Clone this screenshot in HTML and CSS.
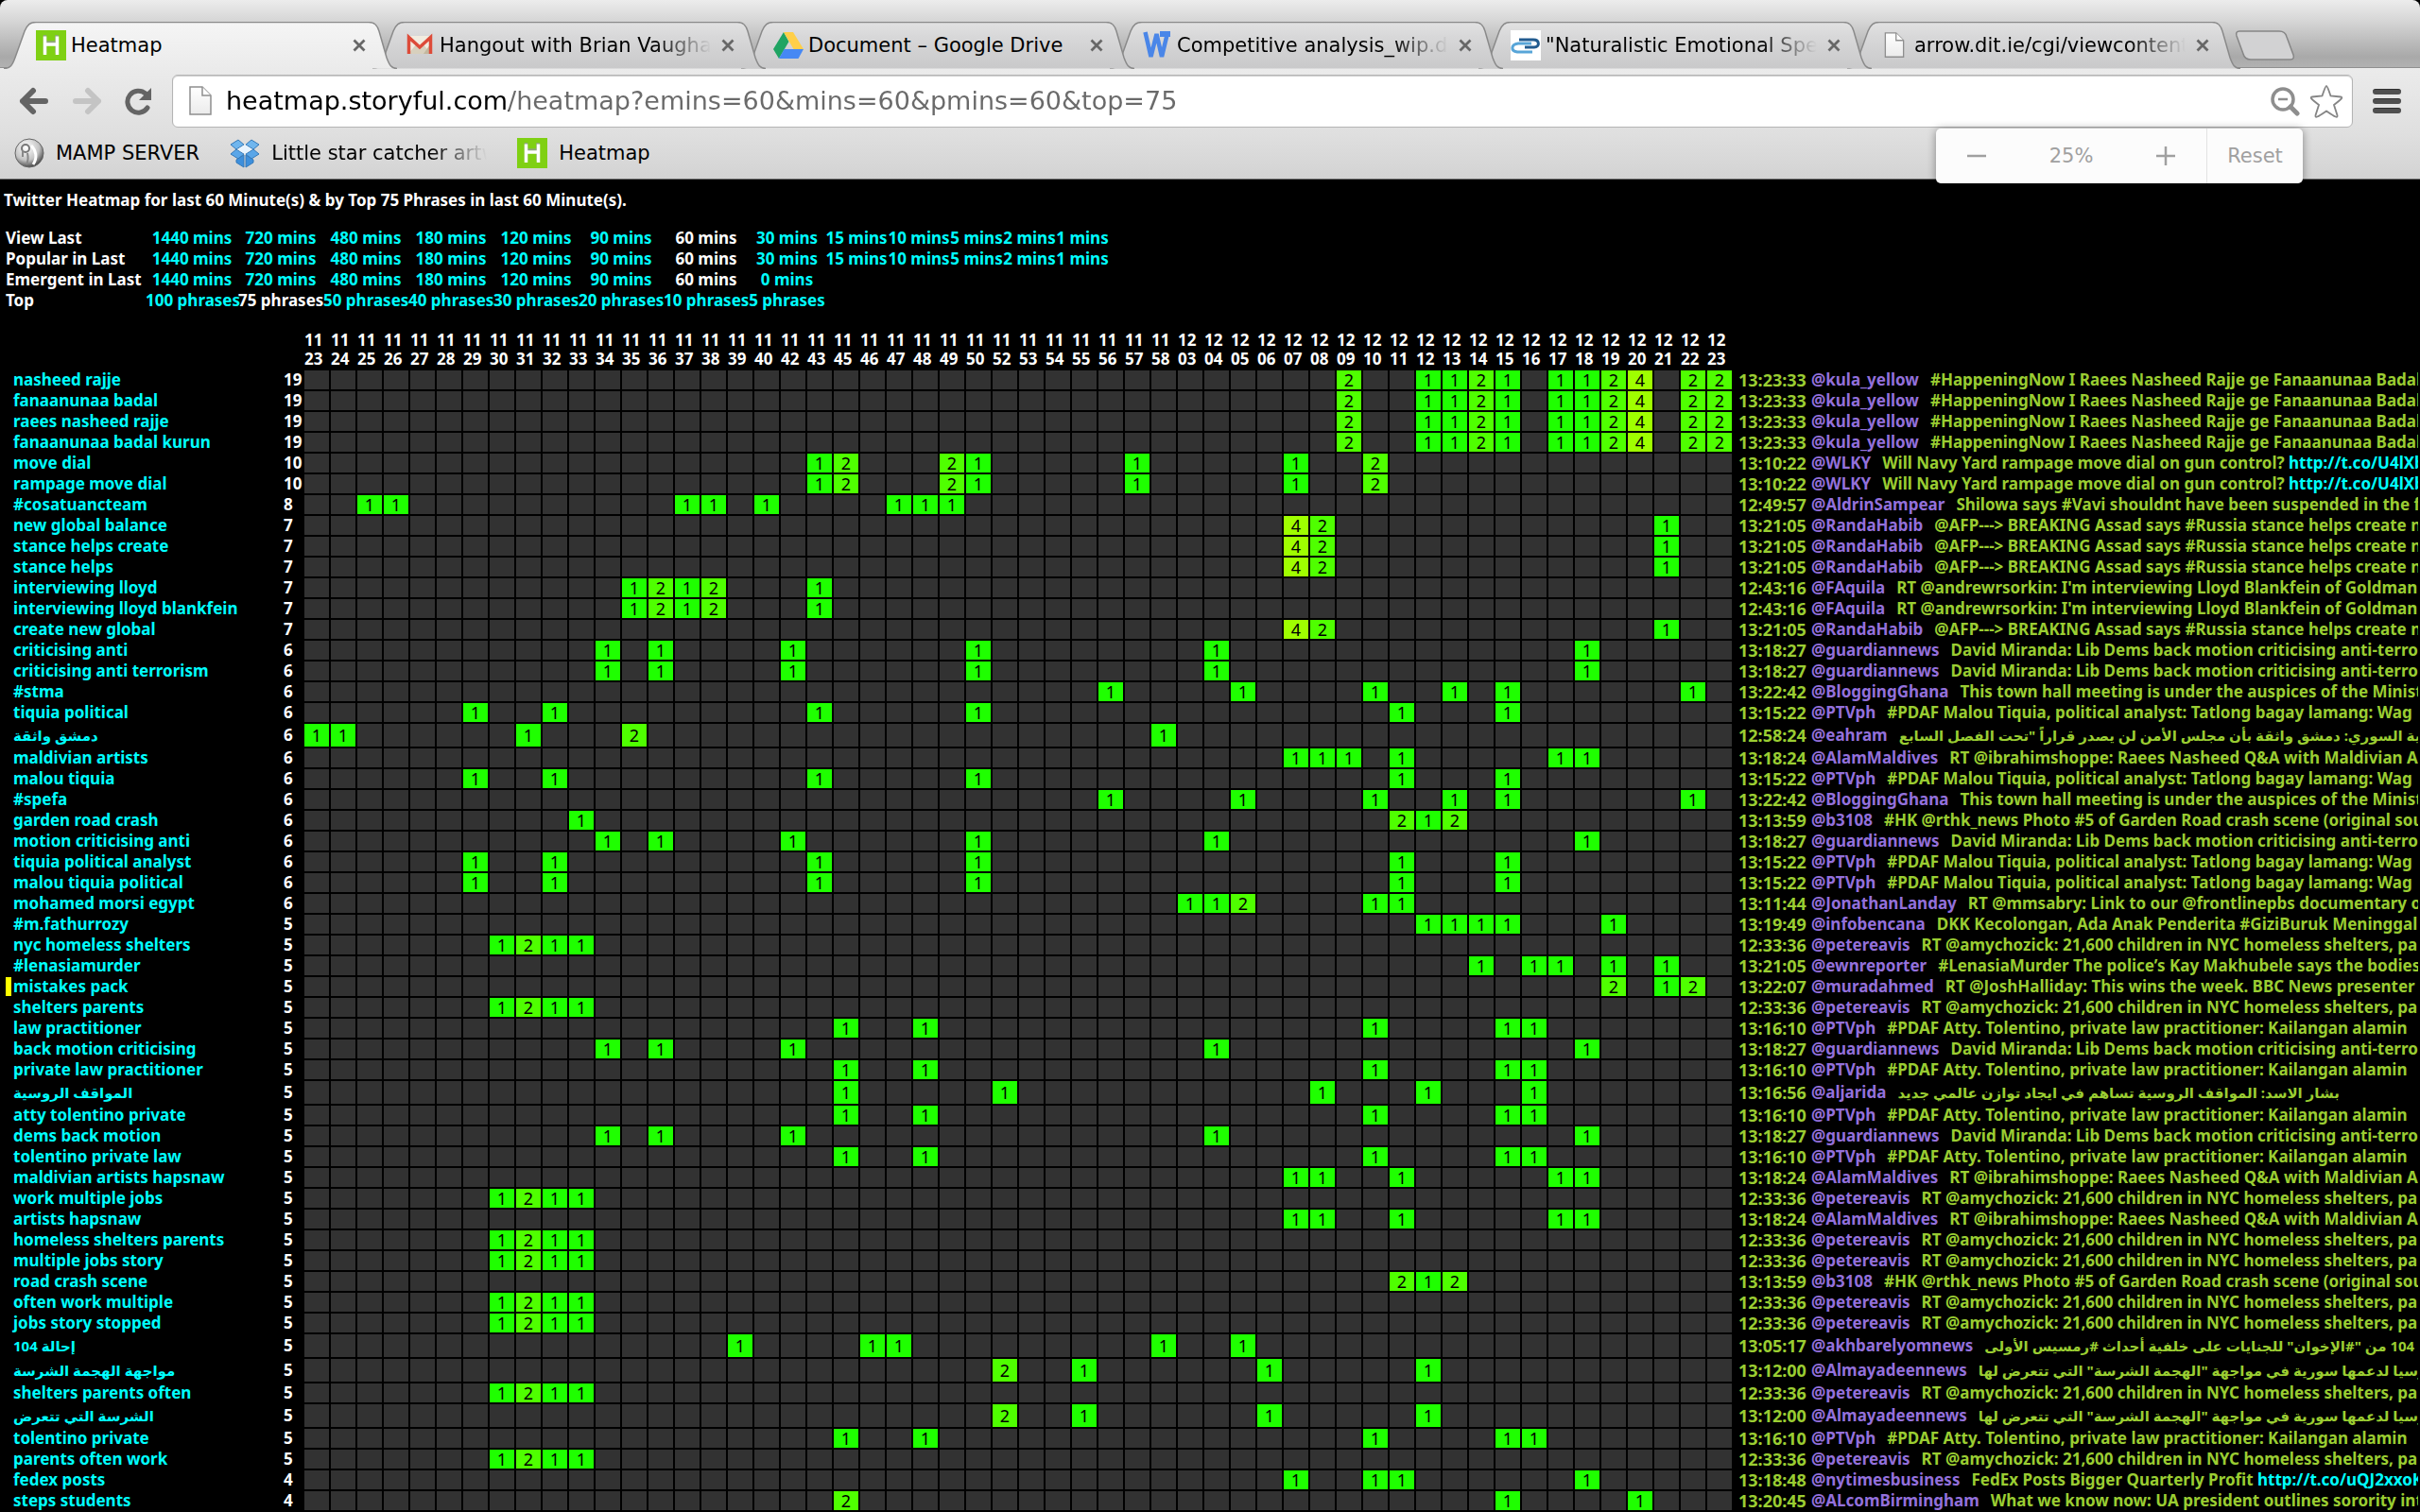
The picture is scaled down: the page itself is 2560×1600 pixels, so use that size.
FILE: index.html
```html
<!DOCTYPE html>
<html lang="en">
<head>
<meta charset="utf-8">
<title>Heatmap</title>
<link rel="stylesheet" href="styles.css">
</head>
<body>
<svg class="defs" aria-hidden="true">
  <defs>
    <linearGradient id="tab-on" x1="0" y1="0" x2="0" y2="1"><stop offset="0" stop-color="#f5f5f5"/><stop offset="1" stop-color="#ebebeb"/></linearGradient>
    <linearGradient id="tab-off" x1="0" y1="0" x2="0" y2="1"><stop offset="0" stop-color="#e2e2e2"/><stop offset="0.3" stop-color="#d8d8d9"/><stop offset="1" stop-color="#c9c9ca"/></linearGradient>
    <linearGradient id="paper" x1="0" y1="0" x2="0" y2="1"><stop offset="0" stop-color="#ffffff"/><stop offset="1" stop-color="#ebebeb"/></linearGradient>
    <radialGradient id="ball" cx="0.4" cy="0.3" r="0.75"><stop offset="0" stop-color="#ffffff"/><stop offset="0.6" stop-color="#c4c4c4"/><stop offset="1" stop-color="#333333"/></radialGradient>
    <symbol id="shape" viewBox="0 0 416 50" preserveAspectRatio="none">
      <path d="M0 49.500C7 49.500 9 46 12 38L22 10C25 3 28 0.500 34 0.500H386C392 0.500 395 3 397 10L405 38C408 46 410 49.500 416 49.500" stroke="#8a8a8a" stroke-width="1.500"/>
    </symbol>
    <symbol id="page" viewBox="0 0 24 32"><path d="M1 1H14L23 10V30H1Z" fill="url(#paper)" stroke="#8f8f8f" stroke-width="1.500"/><path d="M14 1V10H23" fill="#fff" stroke="#8f8f8f" stroke-width="1.500"/></symbol>
    <symbol id="h-logo" viewBox="0 0 32 32"><path fill="#7fd013" d="M0 0H32V32H0Z"/><path fill="none" stroke="#8fa878" stroke-width="3.500" d="M9.500 5V24M22 5V24M9.500 13H22"/><path fill="none" stroke="#fff" stroke-width="3.500" d="M9.500 6.500V26M22.500 6.500V26M9.500 15H22.500"/></symbol>
    <symbol id="close" viewBox="0 0 16 16"><path d="M2.500 2.500L13.500 13.500M13.500 2.500L2.500 13.500" stroke="#676767" stroke-width="2.800" fill="none"/></symbol>
  </defs>
</svg>

<header class="browser">
  <nav class="tabs" aria-label="Open tabs">
    <div class="tab on"><svg class="shape"><use href="#shape" fill="url(#tab-on)"/></svg>
      <div class="tab-body"><svg class="fav"><use href="#h-logo"/></svg><span class="tab-title">Heatmap</span><button class="x" aria-label="Close tab"><svg><use href="#close"/></svg></button></div></div>
    <div class="tab"><svg class="shape"><use href="#shape" fill="url(#tab-off)"/></svg>
      <div class="tab-body"><svg class="fav" viewBox="0 0 32 32"><path fill="#f1ece0" d="M3 6H29V25H3Z"/><path fill="#d8d0bd" d="M4 25L13 14L16 17L19 14L28 25Z"/><path fill="#c3b79e" d="M29 12V25H20Z"/><path fill="none" stroke="#dd4b39" stroke-width="3.500" d="M4.500 25V7.500L16 18L27.500 7.500V25"/></svg><span class="tab-title fade">Hangout with Brian Vaughan</span><button class="x" aria-label="Close tab"><svg><use href="#close"/></svg></button></div></div>
    <div class="tab"><svg class="shape"><use href="#shape" fill="url(#tab-off)"/></svg>
      <div class="tab-body"><svg class="fav" viewBox="0 0 32 32"><path fill="#1fa463" d="M11 2L0 20L6 30L16.500 12Z"/><path fill="#ffcf48" d="M11 2H21L32 20H21.500Z"/><path fill="#4688f4" d="M11.500 20H32L26.500 30H6Z"/></svg><span class="tab-title">Document – Google Drive</span><button class="x" aria-label="Close tab"><svg><use href="#close"/></svg></button></div></div>
    <div class="tab"><svg class="shape"><use href="#shape" fill="url(#tab-off)"/></svg>
      <div class="tab-body"><svg class="fav" viewBox="0 0 32 32"><path fill="none" stroke="#4a86e8" stroke-width="4.500" d="M3.500 2L9.500 28L15.500 4L21 28L27 3"/><path fill="#4a86e8" d="M19 1H30V7H19Z"/></svg><span class="tab-title fade">Competitive analysis_wip.docx</span><button class="x" aria-label="Close tab"><svg><use href="#close"/></svg></button></div></div>
    <div class="tab"><svg class="shape"><use href="#shape" fill="url(#tab-off)"/></svg>
      <div class="tab-body"><svg class="fav" viewBox="0 0 32 32"><path fill="#fff" d="M0 0H32V32H0Z"/><path fill="none" stroke="#225b8f" stroke-width="3" d="M9 10H24C31 10 31 18 25 18H15"/><path fill="none" stroke="#58a5d8" stroke-width="3" d="M22 14H8C0 15 0 22 7 23H23"/></svg><span class="tab-title fade">"Naturalistic Emotional Speech</span><button class="x" aria-label="Close tab"><svg><use href="#close"/></svg></button></div></div>
    <div class="tab"><svg class="shape"><use href="#shape" fill="url(#tab-off)"/></svg>
      <div class="tab-body"><svg class="fav"><use href="#page" x="4" y="2" width="24" height="28"/></svg><span class="tab-title fade">arrow.dit.ie/cgi/viewcontent</span><button class="x" aria-label="Close tab"><svg><use href="#close"/></svg></button></div></div>
    <button class="new-tab" aria-label="New tab"><svg viewBox="0 0 64 32"><path d="M5 1H47C51 1 54 3 55 7L62 26C63 29 62 31 59 31H17C13 31 10 29 9 25L2 6C1 3 2 1 5 1Z" fill="#d2d2d3" stroke="#868686" stroke-width="1.500"/></svg></button>
  </nav>

  <div class="toolbar">
    <button class="tool" aria-label="Back"><svg viewBox="0 0 32 30"><path d="M15 4L4 15L15 26M4 15H28" fill="none" stroke="#646464" stroke-width="6" stroke-linecap="round" stroke-linejoin="round"/></svg></button>
    <button class="tool" aria-label="Forward"><svg viewBox="0 0 32 30"><path d="M17 4L28 15L17 26M28 15H4" fill="none" stroke="#c4c4c4" stroke-width="6" stroke-linecap="round" stroke-linejoin="round"/></svg></button>
    <button class="tool" aria-label="Reload"><svg viewBox="0 0 32 30"><path d="M24 22A11.500 11.500 0 1 1 22 7" fill="none" stroke="#646464" stroke-width="5" stroke-linecap="round"/><path d="M28 1V14H15Z" fill="#646464"/></svg></button>
    <form class="omnibox">
      <svg class="doc"><use href="#page"/></svg>
      <input class="url" type="text" aria-label="Address" value="heatmap.storyful.com/heatmap?emins=60&amp;mins=60&amp;pmins=60&amp;top=75">
      <button class="in-box" type="button" aria-label="Zoom"><svg viewBox="0 0 32 32"><circle cx="14" cy="14" r="11" fill="none" stroke="#8e8e8e" stroke-width="3.500"/><path d="M9 14H19" stroke="#8e8e8e" stroke-width="2.500"/><path d="M22 22L29 29" stroke="#8e8e8e" stroke-width="5" stroke-linecap="round"/></svg></button>
      <button class="in-box star" type="button" aria-label="Bookmark"><svg viewBox="0 0 36 36"><path d="M18 2C19 2 20 5 22.500 12.500L33 13.500C36 14 34 16 26 22L29.500 33C30 36 28 35.500 18 28.500C8 35.500 6 36 6.500 33L10 22C2 16 0 14 3 13.500L13.500 12.500C16 5 17 2 18 2Z" fill="#fff" stroke="#858585" stroke-width="1.800"/></svg></button>
    </form>
    <button class="menu" aria-label="Menu"><i></i><i></i><i></i></button>
  </div>

  <div class="bookmarks">
    <a href="#" class="mark"><svg class="fav" viewBox="0 0 32 32"><circle cx="16" cy="16" r="15" fill="url(#ball)" stroke="#666" stroke-width="1"/><circle cx="12" cy="11" r="4" fill="none" stroke="#777" stroke-width="2"/><path d="M9 13V20M14 16C15 20 15 24 13 28" stroke="#888" stroke-width="2" fill="none"/><path d="M18 8C23 13 25 21 20 28" stroke="#fff" stroke-width="3" fill="none"/></svg><span>MAMP SERVER</span></a>
    <a href="#" class="mark"><svg class="fav" viewBox="0 0 32 32"><g stroke="#3579b8" stroke-width="1"><path fill="#70b6ee" d="M9 2L1 7L7 12L15 7ZM23 2L31 7L25 12L17 7Z"/><path fill="#5aa6e8" d="M1 17L7 12L15 17L9 22ZM31 17L25 12L17 17L23 22Z"/><path fill="#3d8fdc" d="M7 23L15 18V31L7 26ZM25 23L17 18V31L25 26Z"/></g><path fill="#e8f4ff" d="M16 7L24 12L16 17L8 12Z"/></svg><span class="mark-title fade">Little star catcher artwork</span></a>
    <a href="#" class="mark"><svg class="fav"><use href="#h-logo"/></svg><span>Heatmap</span></a>
  </div>

  <div class="zoom" role="dialog" aria-label="Page zoom">
    <button aria-label="Zoom out"><svg viewBox="0 0 20 20"><path d="M0 10H20" stroke="#a0a0a0" stroke-width="2.500"/></svg></button>
    <span>25%</span>
    <button aria-label="Zoom in"><svg viewBox="0 0 20 20"><path d="M0 10H20M10 0V20" stroke="#a0a0a0" stroke-width="2.500"/></svg></button>
    <button class="reset">Reset</button>
  </div>
</header>

<main>
  <h1>Twitter Heatmap for last 60 Minute(s) &amp; by Top 75 Phrases in last 60 Minute(s).</h1>
  <table class="filters">
    <colgroup><col class="f-name"><col class="f-first"><col class="f-wide" span="6"><col class="f-mid"><col class="f-slim" span="2"><col class="f-tiny" span="3"></colgroup>
    <tbody id="filters"></tbody>
  </table>
  <table class="heat">
    <colgroup><col class="c-flag"><col class="c-phrase"><col class="c-total"><col class="c-minute" span="54"><col></colgroup>
    <thead><tr id="minutes"></tr></thead>
    <tbody id="rows"></tbody>
  </table>
</main>
<script src="heatmap.js"></script>
</body>
</html>
```
FILE: styles.css
```css
* { box-sizing: border-box; }

body {
  margin: 0;
  background: #000;
  color: #fff;
  font: bold 17px/20px "Noto Sans", "DejaVu Sans", sans-serif;
  overflow-x: hidden;
}

button {
  border: 0;
  padding: 0;
  background: none;
  font: inherit;
  color: inherit;
}

a { color: #0ff; text-decoration: none; }
svg { display: block; }
.defs { position: absolute; width: 0; height: 0; }

/* Browser frame */
.browser {
  position: relative;
  height: 190px;
  border-bottom: 1px solid #6e6e6e;
  border-radius: 8px 8px 0 0;
  background: linear-gradient(#ececec, #d6d6d6 22px, #a9a9a9 60px, #b2b2b2 72px);
  color: #000;
  font: 21px/28px "DejaVu Sans", sans-serif;
}

.tabs {
  display: flex;
  height: 72px;
  padding: 23px 0 0 4px;
  border-bottom: 1px solid #8f8f8f;
}

.tab {
  display: grid;
  flex: 0 1 416px;
  height: 49px;
  min-width: 0;
  margin-right: -26px;
  z-index: 1;
}
.tab.on { z-index: 9; height: 50px; }
.tab:nth-child(2) { z-index: 6; }
.tab:nth-child(3) { z-index: 5; }
.tab:nth-child(4) { z-index: 4; }
.tab:nth-child(5) { z-index: 3; }
.tab:nth-child(6) { z-index: 2; }

.shape, .tab-body { grid-area: 1 / 1; }
.shape { width: 100%; height: 50px; }

.tab-body {
  display: flex;
  align-items: center;
  min-width: 0;
  padding: 0 32px 0 34px;
}

.fav { flex: none; width: 32px; height: 32px; }

.tab-title {
  flex: 1;
  min-width: 0;
  margin: 0 10px 0 5px;
  overflow: hidden;
  white-space: nowrap;
}

.fade {
  -webkit-mask-image: linear-gradient(to left, transparent, #000 60px);
  mask-image: linear-gradient(to left, transparent, #000 60px);
}

.x svg { width: 16px; height: 16px; }

.new-tab { width: 64px; height: 32px; margin: 9px 0 0 20px; }
.new-tab svg { width: 64px; height: 32px; }

.toolbar {
  display: flex;
  align-items: center;
  height: 70px;
  padding: 0 20px;
  background: linear-gradient(#ebebeb, #dfdfdf);
}

.tool { width: 32px; height: 30px; margin-right: 24px; }
.tool svg { width: 32px; height: 30px; }

.omnibox {
  display: flex;
  flex: 1;
  align-items: center;
  height: 56px;
  margin: 0 21px 0 -6px;
  padding: 0 9px 0 17px;
  border: 1px solid #b4b4b4;
  border-radius: 6px;
  background: #fff;
  box-shadow: inset 0 1px 1px #ccc;
}

.doc { flex: none; width: 24px; height: 32px; }

.url {
  flex: 1;
  min-width: 0;
  height: 40px;
  margin-left: 15px;
  padding: 0;
  border: 0;
  outline: 0;
  font: 27px/40px "DejaVu Sans", sans-serif;
  color: transparent;
  background: linear-gradient(to right, #000 299px, #6a6a6a 299px);
  -webkit-background-clip: text;
  background-clip: text;
}

.in-box svg { width: 32px; height: 32px; }
.star { margin-left: 10px; }
.star svg { width: 36px; height: 36px; }

.menu { display: grid; gap: 4px; width: 30px; }
.menu i { height: 6px; border-radius: 3px; background: #505050; border-top: 1px solid #303030; }

.bookmarks {
  display: flex;
  align-items: center;
  gap: 32px;
  height: 47px;
  padding: 0 15px 8px;
  background: linear-gradient(#dfdfdf, #d3d3d3);
}

.mark { display: flex; align-items: center; gap: 12px; color: #000; }
.mark-title { width: 228px; overflow: hidden; white-space: nowrap; }

.zoom {
  position: absolute;
  z-index: 10;
  top: 136px;
  right: 124px;
  display: grid;
  grid-template-columns: 86px 114px 86px 102px;
  width: 388px;
  height: 58px;
  border-radius: 5px;
  background: #fcfcfc;
  box-shadow: 0 1px 10px rgba(0, 0, 0, 0.4);
  color: #a0a0a0;
  align-items: center;
  text-align: center;
}
.zoom svg { width: 20px; height: 20px; margin: 0 auto; }
.zoom .reset { height: 58px; border-left: 1px solid #e2e2e2; }

/* Heatmap page */
main { padding: 11px 0 0 4px; }

h1 { margin: 0 0 18px; font-size: 17px; line-height: 22px; }

table { table-layout: fixed; border-collapse: separate; border-spacing: 0; }
th, td { padding: 0; text-align: left; font-weight: bold; white-space: nowrap; }

.filters { width: 1114px; margin: 0 0 19px 2px; }
.filters tr { height: 22px; }
.filters td { text-align: center; }
.filters .current { color: #fff; }
.f-name { width: 148px; }
.f-first { width: 98px; }
.f-wide { width: 90px; }
.f-mid { width: 81px; }
.f-slim { width: 66px; }
.f-tiny { width: 56px; }

.heat { width: 100%; border-spacing: 2px; }
.c-flag { width: 6px; }
.c-phrase { width: 284px; }
.c-total { width: 20px; }
.c-minute { width: 26px; }

.heat th { height: 40px; }
.heat tbody tr { height: 20px; }
.heat tbody tr.tall { height: 24px; }
.heat .flag { background: #ff0; }

.heat .cell { background: #323232; color: #000; font-size: 18px; font-weight: 400; text-align: center; }
.heat .n1 { background: #1fff00; }
.heat .n2 { background: #4fff00; }
.heat .n4 { background: #9fff00; }

.tweet { padding-left: 5px; overflow: hidden; color: #9acd32; }
.tweet div { display: flex; }
.tweet time { flex: none; width: 77px; font-size: 18px; }
.tweet .who { margin-right: 12px; color: #9370db; }

/* Arabic runs wide next to the Latin face */
.tall .phrase, .tall .text { font-size: 15px; }
```
FILE: heatmap.js
```js
const spans = '1440 720 480 180 120 90 60 30 15 10 5 2 1'.split(' ').map(n => n + ' mins');
const filters = [
  ['View Last', spans, '60 mins'],
  ['Popular in Last', spans, '60 mins'],
  ['Emergent in Last', spans.slice(0, 7).concat('0 mins'), '60 mins'],
  ['Top', '100 75 50 40 30 20 10 5'.split(' ').map(n => n + ' phrases'), '75 phrases']
];

const minutes = [];
for (let m = 23; m <= 58; m++) if (![41, 44, 51].includes(m)) minutes.push('11' + m);
for (let m = 3; m <= 23; m++) minutes.push('12' + String(m).padStart(2, '0'));

const tweets = {
  kula: ['13:23:33', 'kula_yellow', '#HappeningNow I Raees Nasheed Rajje ge Fanaanunaa Badal Kurun'],
  wlky: ['13:10:22', 'WLKY', 'Will Navy Yard rampage move dial on gun control? <a href="#">http://t.co/U4lXbqk</a>'],
  vavi: ['12:49:57', 'AldrinSampear', 'Shilowa says #Vavi shouldnt have been suspended in the first place'],
  afp: ['13:21:05', 'RandaHabib', '@AFP---&gt; BREAKING Assad says #Russia stance helps create new global balance'],
  lloyd: ['12:43:16', 'FAquila', "RT @andrewrsorkin: I'm interviewing Lloyd Blankfein of Goldman Sachs"],
  guard: ['13:18:27', 'guardiannews', 'David Miranda: Lib Dems back motion criticising anti-terrorism'],
  ghana: ['13:22:42', 'BloggingGhana', 'This town hall meeting is under the auspices of the Ministry'],
  malou: ['13:15:22', 'PTVph', '#PDAF Malou Tiquia, political analyst: Tatlong bagay lamang: Wag'],
  eahram: ['12:58:24', 'eahram', 'وزير الخارجية السوري: دمشق واثقة بأن مجلس الأمن لن يصدر قراراً "تحت الفصل السابع'],
  alam: ['13:18:24', 'AlamMaldives', 'RT @ibrahimshoppe: Raees Nasheed Q&amp;A with Maldivian Artists'],
  hk: ['13:13:59', 'b3108', '#HK @rthk_news Photo #5 of Garden Road crash scene (original source)'],
  landay: ['13:11:44', 'JonathanLanday', 'RT @mmsabry: Link to our @frontlinepbs documentary on'],
  info: ['13:19:49', 'infobencana', 'DKK Kecolongan, Ada Anak Penderita #GiziBuruk Meninggal'],
  nyc: ['12:33:36', 'petereavis', 'RT @amychozick: 21,600 children in NYC homeless shelters, parents'],
  ewn: ['13:21:05', 'ewnreporter', '#LenasiaMurder The police’s Kay Makhubele says the bodies'],
  murad: ['13:22:07', 'muradahmed', 'RT @JoshHalliday: This wins the week. BBC News presenter'],
  atty: ['13:16:10', 'PTVph', '#PDAF Atty. Tolentino, private law practitioner: Kailangan alamin'],
  jarida: ['13:16:56', 'aljarida', 'بشار الاسد: المواقف الروسية تساهم في ايجاد توازن عالمي جديد'],
  akhbar: ['13:05:17', 'akhbarelyomnews', 'إحالة 104 من "#الإخوان" للجنايات على خلفية أحداث #رمسيس الأولى'],
  mayadeen: ['13:12:00', 'Almayadeennews', 'روسيا لدعمها سورية في مواجهة "الهجمة الشرسة" التي تتعرض لها'],
  fedex: ['13:18:48', 'nytimesbusiness', 'FedEx Posts Bigger Quarterly Profit <a href="#">http://t.co/uQJ2xxoKmL</a>'],
  steps: ['13:20:45', 'ALcomBirmingham', 'What we know now: UA president outlines sorority integration']
};

/* Minute:count lists; a minute without a count holds one mention. */
const badal = '1209:2 1212 1213 1214:2 1215 1217 1218 1219:2 1220:4 1222:2 1223:2';
const dial = '1143 1145:2 1149:2 1150 1157 1207 1210:2';
const stance = '1207:4 1208:2 1221';
const blankfein = '1135 1136:2 1137 1138:2 1143';
const anti = '1134 1136 1142 1150 1204 1218';
const dems = '1134 1136 1142 1204 1218';
const ghana = '1156 1205 1210 1213 1215 1222';
const tiquia = '1129 1132 1143 1150 1211 1215';
const shelters = '1130 1131:2 1132 1133';
const law = '1145 1148 1210 1215 1216';
const hapsnaw = '1207 1208 1211 1217 1218';
const attack = '1152:2 1155 1206 1212';

const rows = [
  ['nasheed rajje', 19, badal, 'kula'],
  ['fanaanunaa badal', 19, badal, 'kula'],
  ['raees nasheed rajje', 19, badal, 'kula'],
  ['fanaanunaa badal kurun', 19, badal, 'kula'],
  ['move dial', 10, dial, 'wlky'],
  ['rampage move dial', 10, dial, 'wlky'],
  ['#cosatuancteam', 8, '1125 1126 1137 1138 1140 1147 1148 1149', 'vavi'],
  ['new global balance', 7, stance, 'afp'],
  ['stance helps create', 7, stance, 'afp'],
  ['stance helps', 7, stance, 'afp'],
  ['interviewing lloyd', 7, blankfein, 'lloyd'],
  ['interviewing lloyd blankfein', 7, blankfein, 'lloyd'],
  ['create new global', 7, stance, 'afp'],
  ['criticising anti', 6, anti, 'guard'],
  ['criticising anti terrorism', 6, anti, 'guard'],
  ['#stma', 6, ghana, 'ghana'],
  ['tiquia political', 6, tiquia, 'malou'],
  ['دمشق واثقة', 6, '1123 1124 1131 1135:2 1158', 'eahram', 'tall'],
  ['maldivian artists', 6, '1207 1208 1209 1211 1217 1218', 'alam'],
  ['malou tiquia', 6, tiquia, 'malou'],
  ['#spefa', 6, ghana, 'ghana'],
  ['garden road crash', 6, '1133 1211:2 1212 1213:2', 'hk'],
  ['motion criticising anti', 6, anti, 'guard'],
  ['tiquia political analyst', 6, tiquia, 'malou'],
  ['malou tiquia political', 6, tiquia, 'malou'],
  ['mohamed morsi egypt', 6, '1203 1204 1205:2 1210 1211', 'landay'],
  ['#m.fathurrozy', 5, '1212 1213 1214 1215 1219', 'info'],
  ['nyc homeless shelters', 5, shelters, 'nyc'],
  ['#lenasiamurder', 5, '1214 1216 1217 1219 1221', 'ewn'],
  ['mistakes pack', 5, '1219:2 1221 1222:2', 'murad', 'flagged'],
  ['shelters parents', 5, shelters, 'nyc'],
  ['law practitioner', 5, law, 'atty'],
  ['back motion criticising', 5, dems, 'guard'],
  ['private law practitioner', 5, law, 'atty'],
  ['المواقف الروسية', 5, '1145 1152 1208 1212 1216', 'jarida', 'tall'],
  ['atty tolentino private', 5, law, 'atty'],
  ['dems back motion', 5, dems, 'guard'],
  ['tolentino private law', 5, law, 'atty'],
  ['maldivian artists hapsnaw', 5, hapsnaw, 'alam'],
  ['work multiple jobs', 5, shelters, 'nyc'],
  ['artists hapsnaw', 5, hapsnaw, 'alam'],
  ['homeless shelters parents', 5, shelters, 'nyc'],
  ['multiple jobs story', 5, shelters, 'nyc'],
  ['road crash scene', 5, '1211:2 1212 1213:2', 'hk'],
  ['often work multiple', 5, shelters, 'nyc'],
  ['jobs story stopped', 5, shelters, 'nyc'],
  ['إحالة 104', 5, '1139 1146 1147 1158 1205', 'akhbar', 'tall'],
  ['مواجهة الهجمة الشرسة', 5, attack, 'mayadeen', 'tall'],
  ['shelters parents often', 5, shelters, 'nyc'],
  ['الشرسة التي تتعرض', 5, attack, 'mayadeen', 'tall'],
  ['tolentino private', 5, law, 'atty'],
  ['parents often work', 5, shelters, 'nyc'],
  ['fedex posts', 4, '1207 1210 1211 1218', 'fedex'],
  ['steps students', 4, '1145:2 1215 1220', 'steps']
];

document.getElementById('filters').innerHTML = filters.map(([name, options, current]) =>
  `<tr><th scope="row">${name}</th>` + options.map(o =>
    `<td><a href="#"${o === current ? ' class="current"' : ''}>${o}</a></td>`).join('') + '</tr>').join('');

document.getElementById('minutes').innerHTML = '<td></td><td></td><td></td>' +
  minutes.map(m => `<th scope="col">${m.slice(0, 2)}<br>${m.slice(2)}</th>`).join('') + '<td></td>';

document.getElementById('rows').innerHTML = rows.map(([phrase, total, hits, key, kind]) => {
  const count = Object.fromEntries(hits.split(' ').map(h => [h.slice(0, 4), h.slice(5) || '1']));
  const [time, who, text] = tweets[key];
  return `<tr${kind === 'tall' ? ' class="tall"' : ''}>` +
    `<td${kind === 'flagged' ? ' class="flag"' : ''}></td><td class="phrase"><a href="#">${phrase}</a></td><td>${total}</td>` +
    minutes.map(m => count[m] ? `<td class="cell n${count[m]}">${count[m]}</td>` : '<td class="cell"></td>').join('') +
    `<td class="tweet"><div><time>${time}</time><a href="#" class="who">@${who}</a><span class="text">${text}</span></div></td></tr>`;
}).join('');
```
